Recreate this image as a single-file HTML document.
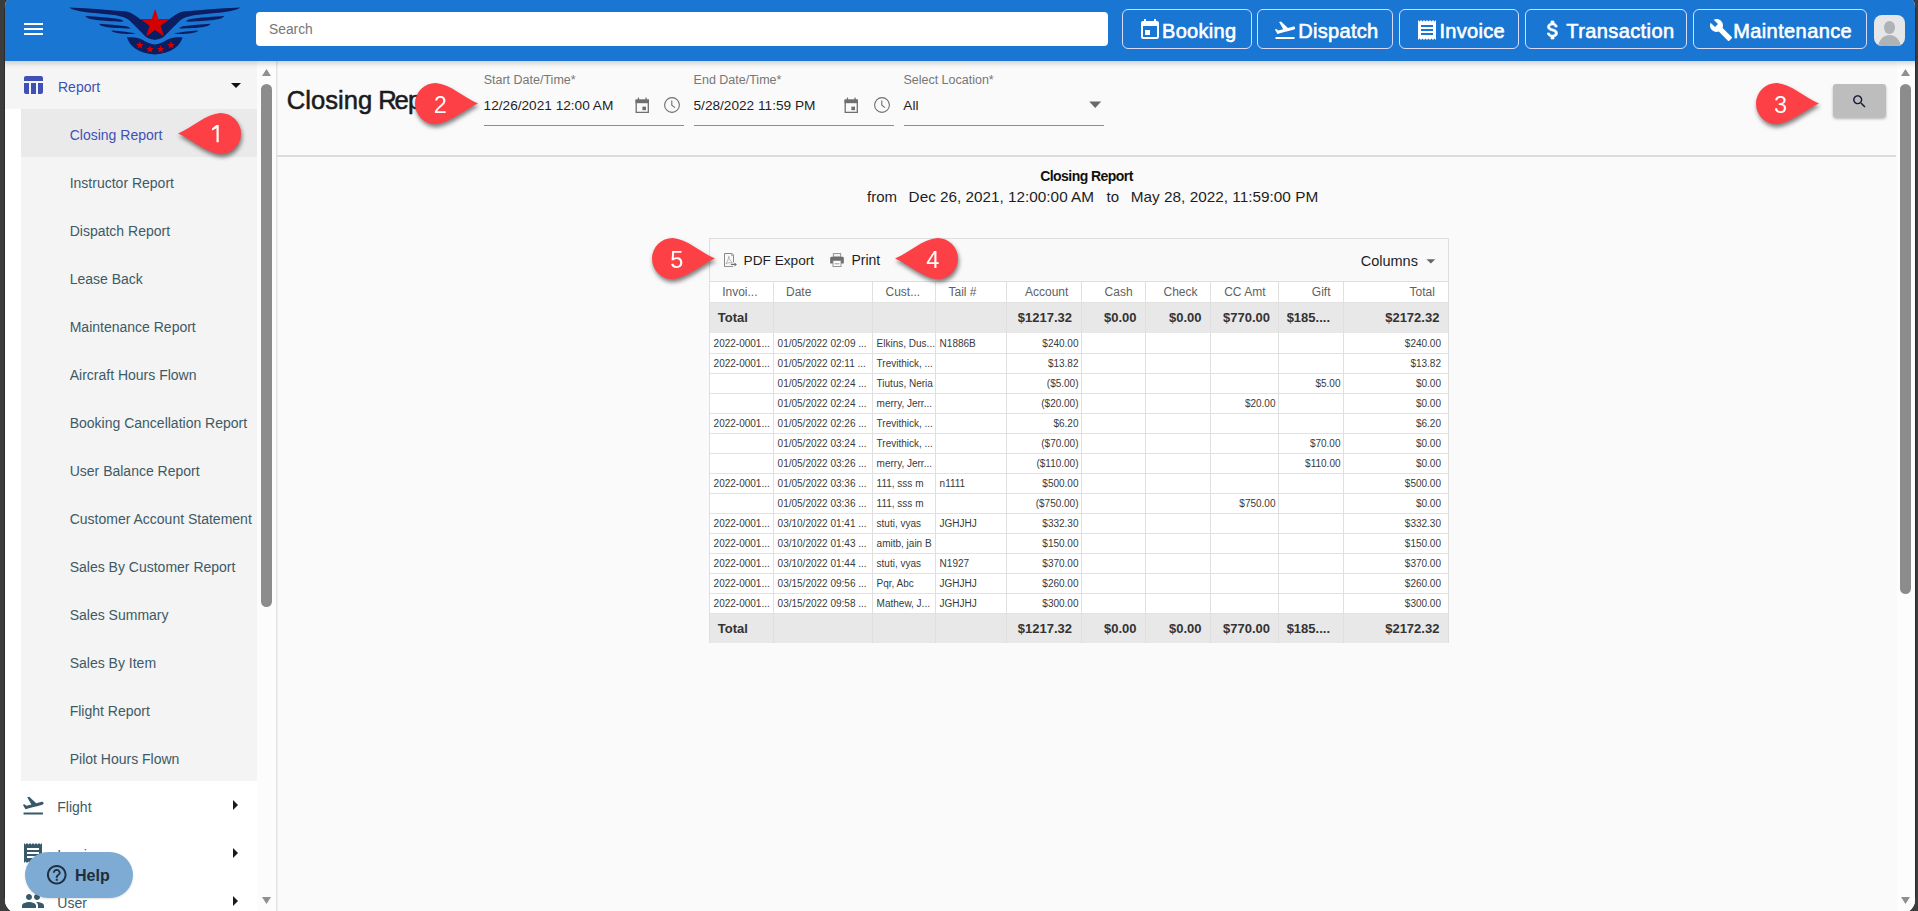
<!DOCTYPE html>
<html><head><meta charset="utf-8">
<style>
*{box-sizing:border-box;margin:0;padding:0}
html,body{width:1918px;height:911px;overflow:hidden;background:#3c3c3c;font-family:"Liberation Sans",sans-serif}
#win{position:absolute;left:0;top:0;width:1918px;height:911px;background:#fafafa;
 clip-path:path('M13,-2 H1907 A8,8 0 0 1 1915,6 V900 A13,13 0 0 1 1902,913 H18 A13,13 0 0 1 5,900 V6 A8,8 0 0 1 13,-2 Z');overflow:hidden}
.abs{position:absolute}
svg{display:block}
.t{position:absolute;white-space:nowrap;line-height:1}
.mk{width:65px;height:42px;z-index:10;filter:drop-shadow(1px 3px 2px rgba(0,0,0,.5))}
/* header */
#hdr{position:absolute;left:0;top:0;width:1918px;height:61px;background:#1976d2;box-shadow:0 2px 6px rgba(0,0,0,.2);z-index:5}
.hb{position:absolute;top:9px;height:40px;border:1px solid #d9dcff;border-radius:6px;color:#fff;font-weight:400;font-size:20px;letter-spacing:.3px;-webkit-text-stroke:.6px #fff;line-height:38px;white-space:nowrap}
.hb svg{position:absolute;top:8px;width:24px;height:24px;fill:#fff}
.hb span{position:absolute;top:1.6px}
/* sidebar */
#side{position:absolute;left:5px;top:61px;width:271px;height:852px;background:#fff}
.sub{position:absolute;left:16px;width:236px;height:48px;background:#f4f4f4;color:#3d5a66;font-size:14px}
.sub span{position:absolute;left:48.7px;top:18px;line-height:16px;white-space:nowrap}
.sub.sel{background:#eaeaea;color:#3f51b5}
.mrow{position:absolute;left:0;width:252px;height:48px;color:#3d5a66;font-size:14px}
.mrow span{position:absolute;left:53px;top:15px}
.mrow svg.ic{position:absolute;left:16px;top:12px;width:24px;height:24px;fill:#37596a}
.mrow svg.ar{position:absolute;left:218px;top:12px;width:24px;height:24px;fill:#1a1a1a}
</style></head><body>
<div style="position:absolute;left:4px;top:8px;width:1px;height:890px;background:#2a2a2a"></div>
<div style="position:absolute;left:1915px;top:8px;width:1px;height:890px;background:#2a2a2a"></div>
<div id="win">

<!-- HEADER -->
<div id="hdr">
  <div class="abs" style="left:24px;top:23px;width:19px;height:2px;background:#fff"></div>
  <div class="abs" style="left:24px;top:28px;width:19px;height:2px;background:#fff"></div>
  <div class="abs" style="left:24px;top:33px;width:19px;height:2px;background:#fff"></div>
  <!-- logo -->
  <svg class="abs" style="left:65px;top:0" width="180" height="60" viewBox="65 0 180 60">
    <g fill="#0b1d63" id="wingL">
      <path d="M69.6,7.4 C80,7.6 100,9.2 126.5,11.4 C131,12.3 135,15 140.6,19.4 L148,31 L154.8,39.6 C150,39.6 146,37.6 143,34 L129.6,20.6 C126,17.8 123,16.6 114,15 C100,13.5 88,12.6 80,11.2 C74,10 70.5,8.6 69.6,7.4 Z"/>
      <path d="M85.3,16.1 C95,16.7 110,17.8 119.1,18.9 C121.5,19.4 123,20.4 123.6,21.6 C118,21.8 112,21.4 108,21.1 C99,20.3 92,19.6 88,18.2 C86.5,17.6 85.6,16.8 85.3,16.1 Z"/>
      <path d="M99.1,23.8 C107,24.4 118,25.3 126.5,26.3 C128.6,26.8 129.8,27.6 130.4,28.4 C125,28.6 118,28.3 114.2,28.1 C108,27.5 103,26.7 101,25.6 C100,25.1 99.4,24.4 99.1,23.8 Z"/>
      <path d="M111.4,30.6 C117,31 124,31.6 130,32.4 C132.5,32.8 134.6,33.2 135.6,33.7 C131,34 126,33.9 123.4,33.7 C119,33.4 115,32.8 113.2,32 C112.2,31.5 111.6,31 111.4,30.6 Z"/>
    </g>
    <use href="#wingL" transform="translate(309.6,0) scale(-1,1)"/>
    <path fill="#0b1d63" d="M140.6,19.2 H169.6 L164.5,36 L154.8,40 L145.1,36 Z"/>
    <path fill="#0b1d63" d="M127,37.3 C133,37.2 138.5,37.6 142.5,39.8 C147,42.6 151,44.4 154.8,44.4 C158.6,44.4 162.6,42.6 167.1,39.8 C171.1,37.6 176.6,37.2 182.6,37.3 C180.5,45.5 172,53.6 154.8,54.5 C137.6,53.6 129.1,45.5 127,37.3 Z"/>
    <path fill="#d40000" d="M155.10,8.80 L158.53,19.34 L169.61,19.34 L160.64,25.86 L164.07,36.41 L155.10,29.89 L146.13,36.41 L149.56,25.86 L140.59,19.34 L151.67,19.34 Z"/>
    <g fill="#d40000"><path d="M0,-3.6 L0.85,-1.17 L3.42,-1.11 L1.37,0.45 L2.12,2.91 L0,1.45 L-2.12,2.91 L-1.37,0.45 L-3.42,-1.11 L-0.85,-1.17 Z" transform="translate(139.8,45.2) scale(1.15)"/><path d="M0,-3.6 L0.85,-1.17 L3.42,-1.11 L1.37,0.45 L2.12,2.91 L0,1.45 L-2.12,2.91 L-1.37,0.45 L-3.42,-1.11 L-0.85,-1.17 Z" transform="translate(150,49.3) scale(1.15)"/><path d="M0,-3.6 L0.85,-1.17 L3.42,-1.11 L1.37,0.45 L2.12,2.91 L0,1.45 L-2.12,2.91 L-1.37,0.45 L-3.42,-1.11 L-0.85,-1.17 Z" transform="translate(160.6,49.3) scale(1.15)"/><path d="M0,-3.6 L0.85,-1.17 L3.42,-1.11 L1.37,0.45 L2.12,2.91 L0,1.45 L-2.12,2.91 L-1.37,0.45 L-3.42,-1.11 L-0.85,-1.17 Z" transform="translate(171,45.2) scale(1.15)"/></g>
  </svg>
  <!-- search -->
  <div class="abs" style="left:256px;top:12px;width:852px;height:34px;background:#fff;border-radius:4px"></div>
  <div class="abs" style="left:269px;top:21px;font-size:13.8px;color:#767676;line-height:18px">Search</div>
  <!-- buttons -->
  <div class="hb" style="left:1122px;width:130px">
    <svg style="left:15px" viewBox="0 0 24 24"><path d="M17 12h-5v5h5v-5zM16 1v2H8V1H6v2H5c-1.11 0-1.99.9-1.99 2L3 19c0 1.1.89 2 2 2h14c1.1 0 2-.9 2-2V5c0-1.1-.9-2-2-2h-1V1h-2zm3 18H5V8h14v11z" transform="translate(24,0) scale(-1,1)"/></svg>
    <span style="left:39px">Booking</span>
  </div>
  <div class="hb" style="left:1257px;width:136px">
    <svg style="left:15px" viewBox="0 0 24 24"><path d="M2.5 19h19v2h-19zm19.57-9.36c-.21-.8-1.04-1.28-1.84-1.06L14.92 10l-6.9-6.43-1.93.51 4.14 7.17-4.97 1.33-1.97-1.54-1.45.39 1.82 3.16.77 1.33 1.6-.43 5.31-1.42 4.35-1.16L21 11.49c.81-.23 1.28-1.05 1.07-1.85z"/></svg>
    <span style="left:40.3px">Dispatch</span>
  </div>
  <div class="hb" style="left:1399px;width:120px">
    <svg style="left:15px" viewBox="0 0 24 24"><path d="M18 17H6v-2h12v2zm0-4H6v-2h12v2zm0-4H6V7h12v2zM3 22l1.5-1.5L6 22l1.5-1.5L9 22l1.5-1.5L12 22l1.5-1.5L15 22l1.5-1.5L18 22l1.5-1.5L21 22V2l-1.5 1.5L18 2l-1.5 1.5L15 2l-1.5 1.5L12 2l-1.5 1.5L9 2 7.5 3.5 6 2 4.5 3.5 3 2v20z"/></svg>
    <span style="left:39.5px">Invoice</span>
  </div>
  <div class="hb" style="left:1525px;width:162px">
    <svg style="left:15px" viewBox="0 0 24 24"><path stroke="#fff" stroke-width=".7" d="M11.8 10.9c-2.27-.59-3-1.2-3-2.15 0-1.09 1.01-1.85 2.7-1.85 1.78 0 2.44.85 2.5 2.1h2.21c-.07-1.72-1.12-3.3-3.21-3.81V3h-3v2.16c-1.94.42-3.5 1.68-3.5 3.61 0 2.31 1.91 3.46 4.7 4.13 2.5.6 3 1.48 3 2.41 0 .69-.49 1.79-2.7 1.79-2.06 0-2.87-.92-2.98-2.1h-2.2c.12 2.19 1.76 3.42 3.68 3.83V21h3v-2.15c1.95-.37 3.5-1.5 3.5-3.55 0-2.84-2.43-3.81-4.7-4.4z"/></svg>
    <span style="left:40.3px;letter-spacing:.4px">Transaction</span>
  </div>
  <div class="hb" style="left:1693px;width:174px">
    <svg style="left:15px" viewBox="0 0 24 24"><path d="M22.7 19l-9.1-9.1c.9-2.3.4-5-1.5-6.9-2-2-5-2.4-7.4-1.3L9 6 6 9 1.6 4.7C.4 7.1.9 10.1 2.9 12.1c1.9 1.9 4.6 2.4 6.9 1.5l9.1 9.1c.4.4 1 .4 1.4 0l2.3-2.3c.5-.4.5-1.1.1-1.4z"/></svg>
    <span style="left:39.2px;letter-spacing:.4px">Maintenance</span>
  </div>
  <!-- avatar -->
  <div class="abs" style="left:1874px;top:14.8px;width:31px;height:30.8px;border-radius:8px;background:#e5e6e8;overflow:hidden">
    <div class="abs" style="left:9.8px;top:6.2px;width:11.6px;height:13px;border-radius:50%;background:#b0b3b6"></div>
    <div class="abs" style="left:3.8px;top:20px;width:23.5px;height:16px;border-radius:50% 50% 0 0 / 80% 80% 0 0;background:#b0b3b6"></div>
  </div>
</div>

<!-- SIDEBAR -->
<div id="side">
  <div class="abs" style="left:0;top:0;width:252px;height:48px;background:#f5f5f5"></div>
  <svg class="abs" style="left:16px;top:12px;width:24px;height:24px;fill:#3f51b5" viewBox="0 0 24 24"><path d="M10 10.02h5V21h-5zM17 21h3c1.1 0 2-.9 2-2v-9h-5v11zm3-18H5c-1.1 0-2 .9-2 2v3h19V5c0-1.1-.9-2-2-2zM3 19c0 1.1.9 2 2 2h3V10H3v9z"/></svg>
  <div class="abs" style="left:53px;top:18px;font-size:14px;line-height:16px;color:#3f51b5">Report</div>
  <svg class="abs" style="left:219px;top:11.6px;width:24px;height:24px;fill:#111" viewBox="0 0 24 24"><path d="M7 10l5 5 5-5z"/></svg>
  <div class="sub sel" style="top:48px"><span>Closing Report</span></div>
  <div class="sub" style="top:96px"><span>Instructor Report</span></div>
  <div class="sub" style="top:144px"><span>Dispatch Report</span></div>
  <div class="sub" style="top:192px"><span>Lease Back</span></div>
  <div class="sub" style="top:240px"><span>Maintenance Report</span></div>
  <div class="sub" style="top:288px"><span>Aircraft Hours Flown</span></div>
  <div class="sub" style="top:336px"><span>Booking Cancellation Report</span></div>
  <div class="sub" style="top:384px"><span>User Balance Report</span></div>
  <div class="sub" style="top:432px"><span>Customer Account Statement</span></div>
  <div class="sub" style="top:480px"><span>Sales By Customer Report</span></div>
  <div class="sub" style="top:528px"><span>Sales Summary</span></div>
  <div class="sub" style="top:576px"><span>Sales By Item</span></div>
  <div class="sub" style="top:624px"><span>Flight Report</span></div>
  <div class="sub" style="top:672px"><span>Pilot Hours Flown</span></div>
  <div class="mrow" style="top:720px"><svg class="ic" style="left:16.2px;top:12.4px;width:24.5px;height:24.5px" viewBox="0 0 24 24"><path d="M2.5 19h19v2h-19zm19.57-9.36c-.21-.8-1.04-1.28-1.84-1.06L14.92 10l-6.9-6.43-1.93.51 4.14 7.17-4.97 1.33-1.97-1.54-1.45.39 1.82 3.16.77 1.33 1.6-.43 5.31-1.42 4.35-1.16L21 11.49c.81-.23 1.28-1.05 1.07-1.85z"/></svg><span style="left:52.3px;top:18px;line-height:16px">Flight</span><svg class="ar" style="left:217.8px;top:11.8px" viewBox="0 0 24 24"><path d="M10 17l5-5-5-5v10z"/></svg></div>
  <div class="mrow" style="top:768px"><svg class="ic" style="left:15.9px" viewBox="0 0 24 24"><path d="M18 17H6v-2h12v2zm0-4H6v-2h12v2zm0-4H6V7h12v2zM3 22l1.5-1.5L6 22l1.5-1.5L9 22l1.5-1.5L12 22l1.5-1.5L15 22l1.5-1.5L18 22l1.5-1.5L21 22V2l-1.5 1.5L18 2l-1.5 1.5L15 2l-1.5 1.5L12 2l-1.5 1.5L9 2 7.5 3.5 6 2 4.5 3.5 3 2v20z"/></svg><span style="left:52.3px;top:18px;line-height:16px">Invoice</span><svg class="ar" style="left:217.8px;top:11.8px" viewBox="0 0 24 24"><path d="M10 17l5-5-5-5v10z"/></svg></div>
  <div class="mrow" style="top:816px"><svg class="ic" style="left:16px" viewBox="0 0 24 24"><path d="M16 11c1.66 0 2.99-1.34 2.99-3S17.66 5 16 5c-1.66 0-3 1.34-3 3s1.34 3 3 3zm-8 0c1.66 0 2.99-1.34 2.99-3S9.66 5 8 5C6.34 5 5 6.34 5 8s1.34 3 3 3zm0 2c-2.33 0-7 1.17-7 3.5V19h14v-2.5c0-2.33-4.67-3.5-7-3.5zm8 0c-.29 0-.62.02-.97.05 1.16.84 1.97 1.97 1.97 3.45V19h6v-2.5c0-2.33-4.67-3.5-7-3.5z"/></svg><span style="left:52.3px;top:18px;line-height:16px">User</span><svg class="ar" style="left:217.8px;top:11.8px" viewBox="0 0 24 24"><path d="M10 17l5-5-5-5v10z"/></svg></div>
  <div class="abs" style="left:252px;top:0;width:19px;height:852px;background:#fcfcfc"></div>
  <div class="abs" style="left:271px;top:0;width:1px;height:852px;background:#e2e2e2"></div>
  <svg class="abs" style="left:257.3px;top:7.8px;width:9px;height:7px" viewBox="0 0 9 7"><path d="M4.5,0 L9,7 H0 Z" fill="#8f8f8f"/></svg>
  <div class="abs" style="left:256px;top:23px;width:11px;height:523px;border-radius:5.5px;background:#8c8c8c"></div>
  <svg class="abs" style="left:256.8px;top:835.7px;width:9px;height:7px" viewBox="0 0 9 7"><path d="M0,0 H9 L4.5,7 Z" fill="#8f8f8f"/></svg>
</div>

<!-- MAIN -->
<div id="main">
<div class="abs" style="left:276px;top:61px;width:1px;height:852px;background:#e4e4e4;"></div>
<div class="abs" style="left:277px;top:61px;width:1px;height:852px;background:#efefef;"></div>
<div class="t" style="left:286.80px;top:88.03px;font-size:25.6px;font-weight:400;color:#1b1b1b;-webkit-text-stroke:.55px #1b1b1b">Closing<span style="letter-spacing:-1px"> </span><span style="letter-spacing:-2.4px">R</span><span style="letter-spacing:-.6px">e</span>port</div>
<div class="t" style="left:483.70px;top:74.32px;font-size:12.5px;font-weight:400;color:#767676;">Start Date/Time*</div>
<div class="t" style="left:483.60px;top:99.45px;font-size:13.65px;font-weight:400;color:#1e1e1e;">12/26/2021 12:00 AM</div>
<div class="abs" style="left:484px;top:125px;width:200px;height:1px;background:#8d8d8d;"></div>
<svg class="abs" style="left:634.6px;top:96.6px" width="15" height="17" viewBox="0 0 15 17"><path d="M1.2,3.2 H13.3 V15.3 H1.2 Z" fill="none" stroke="#6e6e6e" stroke-width="1.3"/><rect x="0.55" y="2.6" width="13.4" height="3.6" fill="#6e6e6e"/><rect x="2.8" y="0.6" width="1.3" height="2.4" fill="#6e6e6e"/><rect x="10.4" y="0.6" width="1.3" height="2.4" fill="#6e6e6e"/><rect x="7.4" y="9.6" width="3.6" height="3.6" fill="#6e6e6e"/></svg>
<svg class="abs" style="left:664.1px;top:97px" width="16" height="16" viewBox="0 0 16 16"><circle cx="8" cy="8" r="7.4" fill="none" stroke="#6e6e6e" stroke-width="1.1"/><path d="M7.8,3.6 V8.2 L11,10.6" fill="none" stroke="#6e6e6e" stroke-width="1.1"/></svg>
<div class="t" style="left:693.60px;top:74.32px;font-size:12.5px;font-weight:400;color:#767676;">End Date/Time*</div>
<div class="t" style="left:693.50px;top:99.45px;font-size:13.65px;font-weight:400;color:#1e1e1e;">5/28/2022 11:59 PM</div>
<div class="abs" style="left:694px;top:125px;width:200px;height:1px;background:#8d8d8d;"></div>
<svg class="abs" style="left:843.6px;top:96.6px" width="15" height="17" viewBox="0 0 15 17"><path d="M1.2,3.2 H13.3 V15.3 H1.2 Z" fill="none" stroke="#6e6e6e" stroke-width="1.3"/><rect x="0.55" y="2.6" width="13.4" height="3.6" fill="#6e6e6e"/><rect x="2.8" y="0.6" width="1.3" height="2.4" fill="#6e6e6e"/><rect x="10.4" y="0.6" width="1.3" height="2.4" fill="#6e6e6e"/><rect x="7.4" y="9.6" width="3.6" height="3.6" fill="#6e6e6e"/></svg>
<svg class="abs" style="left:873.6px;top:97px" width="16" height="16" viewBox="0 0 16 16"><circle cx="8" cy="8" r="7.4" fill="none" stroke="#6e6e6e" stroke-width="1.1"/><path d="M7.8,3.6 V8.2 L11,10.6" fill="none" stroke="#6e6e6e" stroke-width="1.1"/></svg>
<div class="t" style="left:903.40px;top:74.32px;font-size:12.5px;font-weight:400;color:#767676;">Select Location*</div>
<div class="t" style="left:903.30px;top:99.45px;font-size:13.65px;font-weight:400;color:#1e1e1e;">All</div>
<div class="abs" style="left:904px;top:125px;width:200px;height:1px;background:#8d8d8d;"></div>
<svg class="abs" style="left:1088px;top:100px" width="15" height="10" viewBox="0 0 15 10"><path d="M1.2,1.6 H13.2 L7.2,8 Z" fill="#6a6a6a"/></svg>
<div class="abs" style="left:1833px;top:84px;width:53px;height:33px;background:#bdbdbd;border-radius:3px;box-shadow:0 2px 3px rgba(0,0,0,.28)"></div>
<svg class="abs" style="left:1850.8px;top:92.8px" width="17" height="17" viewBox="0 0 24 24"><path fill="#15193a" d="M15.5 14h-.79l-.28-.27C15.41 12.59 16 11.11 16 9.5 16 5.91 13.09 3 9.5 3S3 5.91 3 9.5 5.91 16 9.5 16c1.61 0 3.09-.59 4.23-1.57l.27.28v.79l5 4.99L20.49 19l-4.99-5zm-6 0C7.01 14 5 11.99 5 9.5S7.01 5 9.5 5 14 7.01 14 9.5 11.99 14 9.5 14z"/></svg>
<div class="abs" style="left:277px;top:155px;width:1619px;height:2px;background:#dcdcdc;"></div>
<div class="abs" style="left:1897px;top:61px;width:18px;height:852px;background:#fdfdfd;"></div>
<svg class="abs" style="left:1901px;top:69px" width="9" height="7" viewBox="0 0 9 7"><path d="M4.5,0 L9,7 H0 Z" fill="#8f8f8f"/></svg>
<div class="abs" style="left:1900px;top:84px;width:11px;height:510px;background:#8c8c8c;border-radius:5.5px"></div>
<svg class="abs" style="left:1901px;top:896.7px" width="9" height="7" viewBox="0 0 9 7"><path d="M0,0 H9 L4.5,7 Z" fill="#8f8f8f"/></svg>
<div class="t" style="left:586.5px;width:1000px;text-align:center;top:169.15px;font-size:14px;letter-spacing:-.55px;font-weight:700;color:#111">Closing Report</div>
<div class="t" style="left:867.00px;top:189.30px;font-size:15px;font-weight:400;color:#1e1e1e;">from</div>
<div class="t" style="left:908.60px;top:189.05px;font-size:15.3px;font-weight:400;color:#1e1e1e;">Dec 26, 2021, 12:00:00 AM</div>
<div class="t" style="left:1106.50px;top:189.30px;font-size:15px;font-weight:400;color:#1e1e1e;">to</div>
<div class="t" style="left:1130.80px;top:189.01px;font-size:15.35px;font-weight:400;color:#1e1e1e;">May 28, 2022, 11:59:00 PM</div>
<div class="abs" style="left:709px;top:238px;width:740px;height:1px;background:#dedede;"></div>
<div class="abs" style="left:709px;top:238px;width:1px;height:405px;background:#dedede;"></div>
<div class="abs" style="left:1448px;top:238px;width:1px;height:405px;background:#dedede;"></div>
<div class="abs" style="left:710px;top:239px;width:738px;height:42px;background:#f9f9f9;"></div>
<div class="abs" style="left:709px;top:281px;width:740px;height:1px;background:#dedede;"></div>
<div class="abs" style="left:710px;top:282px;width:738px;height:20px;background:#ffffff;"></div>
<div class="abs" style="left:710px;top:302px;width:738px;height:31px;background:#e8e8e8;"></div>
<div class="abs" style="left:710px;top:333px;width:738px;height:280px;background:#ffffff;"></div>
<div class="abs" style="left:710px;top:613px;width:738px;height:30px;background:#e8e8e8;"></div>
<div class="abs" style="left:710px;top:353px;width:738px;height:1px;background:#e2e2e2;"></div>
<div class="abs" style="left:710px;top:373px;width:738px;height:1px;background:#e2e2e2;"></div>
<div class="abs" style="left:710px;top:393px;width:738px;height:1px;background:#e2e2e2;"></div>
<div class="abs" style="left:710px;top:413px;width:738px;height:1px;background:#e2e2e2;"></div>
<div class="abs" style="left:710px;top:433px;width:738px;height:1px;background:#e2e2e2;"></div>
<div class="abs" style="left:710px;top:453px;width:738px;height:1px;background:#e2e2e2;"></div>
<div class="abs" style="left:710px;top:473px;width:738px;height:1px;background:#e2e2e2;"></div>
<div class="abs" style="left:710px;top:493px;width:738px;height:1px;background:#e2e2e2;"></div>
<div class="abs" style="left:710px;top:513px;width:738px;height:1px;background:#e2e2e2;"></div>
<div class="abs" style="left:710px;top:533px;width:738px;height:1px;background:#e2e2e2;"></div>
<div class="abs" style="left:710px;top:553px;width:738px;height:1px;background:#e2e2e2;"></div>
<div class="abs" style="left:710px;top:573px;width:738px;height:1px;background:#e2e2e2;"></div>
<div class="abs" style="left:710px;top:593px;width:738px;height:1px;background:#e2e2e2;"></div>
<div class="abs" style="left:710px;top:613px;width:738px;height:1px;background:#e2e2e2;"></div>
<div class="abs" style="left:710px;top:302px;width:738px;height:1px;background:#e2e2e2;"></div>
<div class="abs" style="left:773px;top:282px;width:1px;height:361px;background:#e0e0e0;"></div>
<div class="abs" style="left:872px;top:282px;width:1px;height:361px;background:#e0e0e0;"></div>
<div class="abs" style="left:935px;top:282px;width:1px;height:361px;background:#e0e0e0;"></div>
<div class="abs" style="left:1006px;top:282px;width:1px;height:361px;background:#e0e0e0;"></div>
<div class="abs" style="left:1081px;top:282px;width:1px;height:361px;background:#e0e0e0;"></div>
<div class="abs" style="left:1145px;top:282px;width:1px;height:361px;background:#e0e0e0;"></div>
<div class="abs" style="left:1210px;top:282px;width:1px;height:361px;background:#e0e0e0;"></div>
<div class="abs" style="left:1278px;top:282px;width:1px;height:361px;background:#e0e0e0;"></div>
<div class="abs" style="left:1343px;top:282px;width:1px;height:361px;background:#e0e0e0;"></div>
<svg class="abs" style="left:722.5px;top:252.8px" width="14" height="14" viewBox="0 0 14 14"><path d="M10.5,9.3 V1.8 L8.8,0.5 H1.5 V13.6 H10.2" fill="none" stroke="#888" stroke-width="1"/><path d="M8.6,0.5 V2.6 H10.8" fill="none" stroke="#999" stroke-width=".8"/><path d="M3,10.8 C4.4,8.6 5.5,6 5.8,3.3 C6.2,6 7.4,8.3 9.3,9.6 C7.3,9.5 5,9.8 3,10.8 Z" fill="none" stroke="#a0a0a0" stroke-width=".75"/><path d="M7.8,11.4 H12.2" fill="none" stroke="#707070" stroke-width="1.3"/><path d="M11.6,9.4 L13.9,11.4 L11.6,13.4 Z" fill="#707070"/></svg>
<div class="t" style="left:743.60px;top:253.75px;font-size:13.65px;font-weight:400;color:#1e1e1e;">PDF Export</div>
<svg class="abs" style="left:830.2px;top:253px" width="14" height="14" viewBox="0 0 14 14"><rect x="3.3" y="0.6" width="7.4" height="3.4" fill="#f4f4f4" stroke="#8a8a8a" stroke-width=".9"/><path d="M1.6,3.8 H12.4 Q13.8,3.8 13.8,5.2 V10.4 H0.2 V5.2 Q0.2,3.8 1.6,3.8 Z" fill="#6e6e6e"/><rect x="3" y="7.6" width="8" height="5.9" fill="#fff" stroke="#8a8a8a" stroke-width=".9"/><path d="M4.6,10.8 H9.4" stroke="#8a8a8a" stroke-width=".9"/></svg>
<div class="t" style="left:851.40px;top:253.45px;font-size:14px;font-weight:400;color:#1e1e1e;">Print</div>
<div class="t" style="left:1360.70px;top:253.53px;font-size:14.5px;font-weight:400;color:#1e1e1e;">Columns</div>
<svg class="abs" style="left:1425px;top:258px" width="12" height="8" viewBox="0 0 12 8"><path d="M1.4,1.2 H10.3 L5.85,5.6 Z" fill="#666"/></svg>
<div class="t" style="left:722.20px;top:285.84px;font-size:12px;font-weight:400;color:#5f5f5f;">Invoi...</div>
<div class="t" style="left:786.00px;top:285.84px;font-size:12px;font-weight:400;color:#5f5f5f;">Date</div>
<div class="t" style="left:885.50px;top:285.84px;font-size:12px;font-weight:400;color:#5f5f5f;">Cust...</div>
<div class="t" style="left:948.50px;top:285.84px;font-size:12px;font-weight:400;color:#5f5f5f;">Tail #</div>
<div class="t" style="right:849.70px;top:285.84px;font-size:12px;font-weight:400;color:#5f5f5f;">Account</div>
<div class="t" style="right:785.40px;top:285.84px;font-size:12px;font-weight:400;color:#5f5f5f;">Cash</div>
<div class="t" style="right:720.50px;top:285.84px;font-size:12px;font-weight:400;color:#5f5f5f;">Check</div>
<div class="t" style="right:652.50px;top:285.84px;font-size:12px;font-weight:400;color:#5f5f5f;">CC Amt</div>
<div class="t" style="right:587.50px;top:285.84px;font-size:12px;font-weight:400;color:#5f5f5f;">Gift</div>
<div class="t" style="right:483.20px;top:285.84px;font-size:12px;font-weight:400;color:#5f5f5f;">Total</div>
<div class="t" style="left:717.80px;top:311.00px;font-size:13px;font-weight:700;color:#333;">Total</div>
<div class="t" style="right:846.00px;top:311.00px;font-size:13px;font-weight:700;color:#333;">$1217.32</div>
<div class="t" style="right:781.50px;top:311.00px;font-size:13px;font-weight:700;color:#333;">$0.00</div>
<div class="t" style="right:716.50px;top:311.00px;font-size:13px;font-weight:700;color:#333;">$0.00</div>
<div class="t" style="right:648.00px;top:311.00px;font-size:13px;font-weight:700;color:#333;">$770.00</div>
<div class="t" style="right:588.00px;top:311.00px;font-size:13px;font-weight:700;color:#333;">$185....</div>
<div class="t" style="right:478.60px;top:311.00px;font-size:13px;font-weight:700;color:#333;">$2172.32</div>
<div class="t" style="left:717.80px;top:622.00px;font-size:13px;font-weight:700;color:#333;">Total</div>
<div class="t" style="right:846.00px;top:622.00px;font-size:13px;font-weight:700;color:#333;">$1217.32</div>
<div class="t" style="right:781.50px;top:622.00px;font-size:13px;font-weight:700;color:#333;">$0.00</div>
<div class="t" style="right:716.50px;top:622.00px;font-size:13px;font-weight:700;color:#333;">$0.00</div>
<div class="t" style="right:648.00px;top:622.00px;font-size:13px;font-weight:700;color:#333;">$770.00</div>
<div class="t" style="right:588.00px;top:622.00px;font-size:13px;font-weight:700;color:#333;">$185....</div>
<div class="t" style="right:478.60px;top:622.00px;font-size:13px;font-weight:700;color:#333;">$2172.32</div>
<div class="t" style="left:713.60px;top:338.54px;font-size:10px;font-weight:400;color:#3a3a3a;">2022-0001...</div>
<div class="t" style="left:777.60px;top:338.54px;font-size:10px;font-weight:400;color:#3a3a3a;">01/05/2022 02:09 ...</div>
<div class="t" style="left:876.60px;top:338.54px;font-size:10px;font-weight:400;color:#3a3a3a;">Elkins, Dus...</div>
<div class="t" style="left:939.60px;top:338.54px;font-size:10px;font-weight:400;color:#3a3a3a;">N1886B</div>
<div class="t" style="right:839.50px;top:338.54px;font-size:10px;font-weight:400;color:#3a3a3a;">$240.00</div>
<div class="t" style="right:477.00px;top:338.54px;font-size:10px;font-weight:400;color:#3a3a3a;">$240.00</div>
<div class="t" style="left:713.60px;top:358.54px;font-size:10px;font-weight:400;color:#3a3a3a;">2022-0001...</div>
<div class="t" style="left:777.60px;top:358.54px;font-size:10px;font-weight:400;color:#3a3a3a;">01/05/2022 02:11 ...</div>
<div class="t" style="left:876.60px;top:358.54px;font-size:10px;font-weight:400;color:#3a3a3a;">Trevithick, ...</div>
<div class="t" style="right:839.50px;top:358.54px;font-size:10px;font-weight:400;color:#3a3a3a;">$13.82</div>
<div class="t" style="right:477.00px;top:358.54px;font-size:10px;font-weight:400;color:#3a3a3a;">$13.82</div>
<div class="t" style="left:777.60px;top:378.54px;font-size:10px;font-weight:400;color:#3a3a3a;">01/05/2022 02:24 ...</div>
<div class="t" style="left:876.60px;top:378.54px;font-size:10px;font-weight:400;color:#3a3a3a;">Tiutus, Neria</div>
<div class="t" style="right:839.50px;top:378.54px;font-size:10px;font-weight:400;color:#3a3a3a;">($5.00)</div>
<div class="t" style="right:577.50px;top:378.54px;font-size:10px;font-weight:400;color:#3a3a3a;">$5.00</div>
<div class="t" style="right:477.00px;top:378.54px;font-size:10px;font-weight:400;color:#3a3a3a;">$0.00</div>
<div class="t" style="left:777.60px;top:398.54px;font-size:10px;font-weight:400;color:#3a3a3a;">01/05/2022 02:24 ...</div>
<div class="t" style="left:876.60px;top:398.54px;font-size:10px;font-weight:400;color:#3a3a3a;">merry, Jerr...</div>
<div class="t" style="right:839.50px;top:398.54px;font-size:10px;font-weight:400;color:#3a3a3a;">($20.00)</div>
<div class="t" style="right:642.50px;top:398.54px;font-size:10px;font-weight:400;color:#3a3a3a;">$20.00</div>
<div class="t" style="right:477.00px;top:398.54px;font-size:10px;font-weight:400;color:#3a3a3a;">$0.00</div>
<div class="t" style="left:713.60px;top:418.54px;font-size:10px;font-weight:400;color:#3a3a3a;">2022-0001...</div>
<div class="t" style="left:777.60px;top:418.54px;font-size:10px;font-weight:400;color:#3a3a3a;">01/05/2022 02:26 ...</div>
<div class="t" style="left:876.60px;top:418.54px;font-size:10px;font-weight:400;color:#3a3a3a;">Trevithick, ...</div>
<div class="t" style="right:839.50px;top:418.54px;font-size:10px;font-weight:400;color:#3a3a3a;">$6.20</div>
<div class="t" style="right:477.00px;top:418.54px;font-size:10px;font-weight:400;color:#3a3a3a;">$6.20</div>
<div class="t" style="left:777.60px;top:438.54px;font-size:10px;font-weight:400;color:#3a3a3a;">01/05/2022 03:24 ...</div>
<div class="t" style="left:876.60px;top:438.54px;font-size:10px;font-weight:400;color:#3a3a3a;">Trevithick, ...</div>
<div class="t" style="right:839.50px;top:438.54px;font-size:10px;font-weight:400;color:#3a3a3a;">($70.00)</div>
<div class="t" style="right:577.50px;top:438.54px;font-size:10px;font-weight:400;color:#3a3a3a;">$70.00</div>
<div class="t" style="right:477.00px;top:438.54px;font-size:10px;font-weight:400;color:#3a3a3a;">$0.00</div>
<div class="t" style="left:777.60px;top:458.54px;font-size:10px;font-weight:400;color:#3a3a3a;">01/05/2022 03:26 ...</div>
<div class="t" style="left:876.60px;top:458.54px;font-size:10px;font-weight:400;color:#3a3a3a;">merry, Jerr...</div>
<div class="t" style="right:839.50px;top:458.54px;font-size:10px;font-weight:400;color:#3a3a3a;">($110.00)</div>
<div class="t" style="right:577.50px;top:458.54px;font-size:10px;font-weight:400;color:#3a3a3a;">$110.00</div>
<div class="t" style="right:477.00px;top:458.54px;font-size:10px;font-weight:400;color:#3a3a3a;">$0.00</div>
<div class="t" style="left:713.60px;top:478.54px;font-size:10px;font-weight:400;color:#3a3a3a;">2022-0001...</div>
<div class="t" style="left:777.60px;top:478.54px;font-size:10px;font-weight:400;color:#3a3a3a;">01/05/2022 03:36 ...</div>
<div class="t" style="left:876.60px;top:478.54px;font-size:10px;font-weight:400;color:#3a3a3a;">111, sss m</div>
<div class="t" style="left:939.60px;top:478.54px;font-size:10px;font-weight:400;color:#3a3a3a;">n1111</div>
<div class="t" style="right:839.50px;top:478.54px;font-size:10px;font-weight:400;color:#3a3a3a;">$500.00</div>
<div class="t" style="right:477.00px;top:478.54px;font-size:10px;font-weight:400;color:#3a3a3a;">$500.00</div>
<div class="t" style="left:777.60px;top:498.54px;font-size:10px;font-weight:400;color:#3a3a3a;">01/05/2022 03:36 ...</div>
<div class="t" style="left:876.60px;top:498.54px;font-size:10px;font-weight:400;color:#3a3a3a;">111, sss m</div>
<div class="t" style="right:839.50px;top:498.54px;font-size:10px;font-weight:400;color:#3a3a3a;">($750.00)</div>
<div class="t" style="right:642.50px;top:498.54px;font-size:10px;font-weight:400;color:#3a3a3a;">$750.00</div>
<div class="t" style="right:477.00px;top:498.54px;font-size:10px;font-weight:400;color:#3a3a3a;">$0.00</div>
<div class="t" style="left:713.60px;top:518.53px;font-size:10px;font-weight:400;color:#3a3a3a;">2022-0001...</div>
<div class="t" style="left:777.60px;top:518.53px;font-size:10px;font-weight:400;color:#3a3a3a;">03/10/2022 01:41 ...</div>
<div class="t" style="left:876.60px;top:518.53px;font-size:10px;font-weight:400;color:#3a3a3a;">stuti, vyas</div>
<div class="t" style="left:939.60px;top:518.53px;font-size:10px;font-weight:400;color:#3a3a3a;">JGHJHJ</div>
<div class="t" style="right:839.50px;top:518.53px;font-size:10px;font-weight:400;color:#3a3a3a;">$332.30</div>
<div class="t" style="right:477.00px;top:518.53px;font-size:10px;font-weight:400;color:#3a3a3a;">$332.30</div>
<div class="t" style="left:713.60px;top:538.53px;font-size:10px;font-weight:400;color:#3a3a3a;">2022-0001...</div>
<div class="t" style="left:777.60px;top:538.53px;font-size:10px;font-weight:400;color:#3a3a3a;">03/10/2022 01:43 ...</div>
<div class="t" style="left:876.60px;top:538.53px;font-size:10px;font-weight:400;color:#3a3a3a;">amitb, jain B</div>
<div class="t" style="right:839.50px;top:538.53px;font-size:10px;font-weight:400;color:#3a3a3a;">$150.00</div>
<div class="t" style="right:477.00px;top:538.53px;font-size:10px;font-weight:400;color:#3a3a3a;">$150.00</div>
<div class="t" style="left:713.60px;top:558.53px;font-size:10px;font-weight:400;color:#3a3a3a;">2022-0001...</div>
<div class="t" style="left:777.60px;top:558.53px;font-size:10px;font-weight:400;color:#3a3a3a;">03/10/2022 01:44 ...</div>
<div class="t" style="left:876.60px;top:558.53px;font-size:10px;font-weight:400;color:#3a3a3a;">stuti, vyas</div>
<div class="t" style="left:939.60px;top:558.53px;font-size:10px;font-weight:400;color:#3a3a3a;">N1927</div>
<div class="t" style="right:839.50px;top:558.53px;font-size:10px;font-weight:400;color:#3a3a3a;">$370.00</div>
<div class="t" style="right:477.00px;top:558.53px;font-size:10px;font-weight:400;color:#3a3a3a;">$370.00</div>
<div class="t" style="left:713.60px;top:578.53px;font-size:10px;font-weight:400;color:#3a3a3a;">2022-0001...</div>
<div class="t" style="left:777.60px;top:578.53px;font-size:10px;font-weight:400;color:#3a3a3a;">03/15/2022 09:56 ...</div>
<div class="t" style="left:876.60px;top:578.53px;font-size:10px;font-weight:400;color:#3a3a3a;">Pqr, Abc</div>
<div class="t" style="left:939.60px;top:578.53px;font-size:10px;font-weight:400;color:#3a3a3a;">JGHJHJ</div>
<div class="t" style="right:839.50px;top:578.53px;font-size:10px;font-weight:400;color:#3a3a3a;">$260.00</div>
<div class="t" style="right:477.00px;top:578.53px;font-size:10px;font-weight:400;color:#3a3a3a;">$260.00</div>
<div class="t" style="left:713.60px;top:598.53px;font-size:10px;font-weight:400;color:#3a3a3a;">2022-0001...</div>
<div class="t" style="left:777.60px;top:598.53px;font-size:10px;font-weight:400;color:#3a3a3a;">03/15/2022 09:58 ...</div>
<div class="t" style="left:876.60px;top:598.53px;font-size:10px;font-weight:400;color:#3a3a3a;">Mathew, J...</div>
<div class="t" style="left:939.60px;top:598.53px;font-size:10px;font-weight:400;color:#3a3a3a;">JGHJHJ</div>
<div class="t" style="right:839.50px;top:598.53px;font-size:10px;font-weight:400;color:#3a3a3a;">$300.00</div>
<div class="t" style="right:477.00px;top:598.53px;font-size:10px;font-weight:400;color:#3a3a3a;">$300.00</div>
</div>
<!-- /MAIN -->
<!-- OVERLAY -->
<div class="abs mk" style="left:177.9px;top:112.9px"><svg width="65" height="42" viewBox="0 0 65 42" style="overflow:visible"><path d="M0,20.6 C14,14.5 28,1 42.4,0 A20.6,20.6 0 0 1 42.4,41.2 C28,40.2 14,26.7 0,20.6 Z" fill="#fc4045"/><path d="M38.5,12.1 H40.7 V29.3 H38.5 V15.3 L34,17.6 V15.6 L38.3,12.1 Z" fill="#fff"/></svg></div>
<div class="abs mk" style="left:415.4px;top:82.8px"><svg width="65" height="42" viewBox="0 0 65 42" style="overflow:visible"><path d="M63,20.6 C49,14.5 35,1 20.6,0 A20.6,20.6 0 0 0 20.6,41.2 C35,40.2 49,26.7 63,20.6 Z" fill="#fc4045"/></svg><div class="t" style="left:4.8px;width:40px;text-align:center;top:11.21px;font-size:23.5px;color:#fff">2</div></div>
<div class="abs mk" style="left:1755.8px;top:82.9px"><svg width="65" height="42" viewBox="0 0 65 42" style="overflow:visible"><path d="M63,20.6 C49,14.5 35,1 20.6,0 A20.6,20.6 0 0 0 20.6,41.2 C35,40.2 49,26.7 63,20.6 Z" fill="#fc4045"/></svg><div class="t" style="left:4.8px;width:40px;text-align:center;top:11.21px;font-size:23.5px;color:#fff">3</div></div>
<div class="abs mk" style="left:895px;top:237.9px"><svg width="65" height="42" viewBox="0 0 65 42" style="overflow:visible"><path d="M0,20.6 C14,14.5 28,1 42.4,0 A20.6,20.6 0 0 1 42.4,41.2 C28,40.2 14,26.7 0,20.6 Z" fill="#fc4045"/></svg><div class="t" style="left:17.8px;width:40px;text-align:center;top:11.21px;font-size:23.5px;color:#fff">4</div></div>
<div class="abs mk" style="left:652px;top:237.9px"><svg width="65" height="42" viewBox="0 0 65 42" style="overflow:visible"><path d="M63,20.6 C49,14.5 35,1 20.6,0 A20.6,20.6 0 0 0 20.6,41.2 C35,40.2 49,26.7 63,20.6 Z" fill="#fc4045"/></svg><div class="t" style="left:4.8px;width:40px;text-align:center;top:11.21px;font-size:23.5px;color:#fff">5</div></div>
<div class="abs" style="left:25px;top:852px;width:108px;height:46px;border-radius:23px;background:#7eabd4;box-shadow:0 1px 2px rgba(0,0,0,.12)"></div>
<svg class="abs" style="left:45px;top:863px" width="23.5" height="23.5" viewBox="0 0 24 24"><path fill="#1f2f3f" d="M11 18h2v-2h-2v2zm1-16C6.48 2 2 6.48 2 12s4.48 10 10 10 10-4.48 10-10S17.52 2 12 2zm0 18c-4.41 0-8-3.59-8-8s3.59-8 8-8 8 3.59 8 8-3.59 8-8 8zm0-14c-2.21 0-4 1.79-4 4h2c0-1.1.9-2 2-2s2 .9 2 2c0 2-3 1.75-3 5h2c0-2.25 3-2.5 3-5 0-2.21-1.79-4-4-4z"/></svg>
<div class="t" style="left:75px;top:868.26px;font-size:16px;font-weight:700;color:#1f2d3d">Help</div>
<!-- /OVERLAY -->

</div>
</body></html>
